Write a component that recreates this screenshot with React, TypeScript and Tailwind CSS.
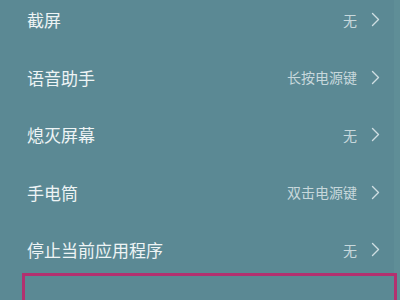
import React from "react";

const rows: { label: string; value?: string }[] = [
  { label: "截屏", value: "无" },
  { label: "语音助手", value: "长按电源键" },
  { label: "熄灭屏幕", value: "无" },
  { label: "手电筒", value: "双击电源键" },
  { label: "停止当前应用程序", value: "无" },
  { label: "打开相机" },
];

function Chevron() {
  return (
    <svg width="9" height="15" viewBox="0 0 9 15" fill="none" className="shrink-0">
      <path d="M1.5 1.5 L7.5 7.5 L1.5 13.5" stroke="#cfdee2" strokeWidth="1.4" strokeLinecap="round" strokeLinejoin="round" />
    </svg>
  );
}

export default function App() {
  return (
    <div
      className="relative w-[400px] h-[300px] overflow-hidden bg-[#5b8994]"
      style={{ fontFamily: '"Noto Sans CJK SC", "Noto Sans", sans-serif' }}
    >
      <div className="flex flex-col -mt-[9px]">
        {rows.map((r) => (
          <div key={r.label} className="flex h-[57.5px] shrink-0 items-center justify-between pl-[27px] pr-[20px]">
            <span className="text-[17px] leading-none text-[#eef4f5]">{r.label}</span>
            {r.value && (
              <div className="flex items-center gap-[14px]">
                <span className="text-[14px] leading-none text-[#c7d8dc]">{r.value}</span>
                <Chevron />
              </div>
            )}
          </div>
        ))}
      </div>
      <div className="absolute right-0 top-0 h-full w-[6px] bg-[#5f8e97]" />
      <div className="absolute left-[22px] top-[273px] w-[375px] h-[60px] border-[3px] border-[#b3306f]" />
    </div>
  );
}
